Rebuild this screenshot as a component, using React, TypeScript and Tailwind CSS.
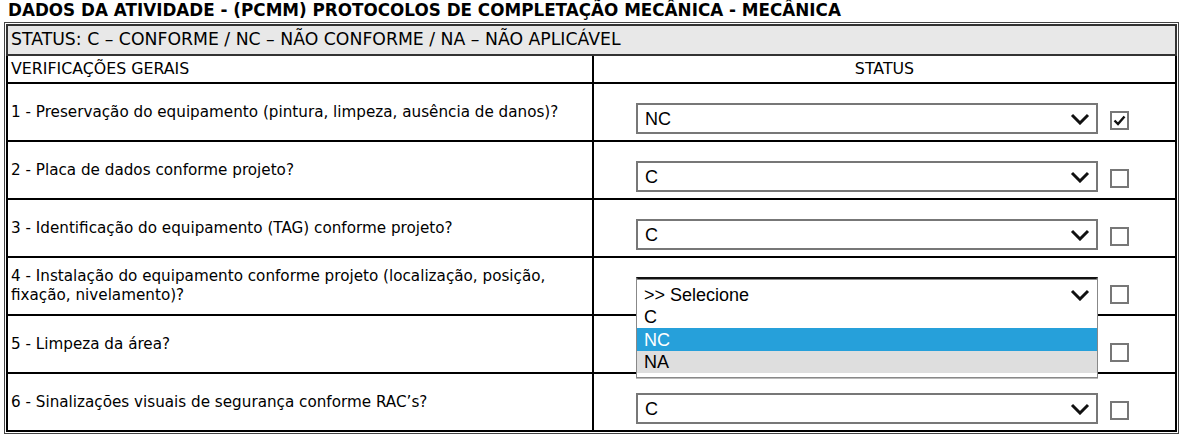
import { useState } from 'react';

type Status = '' | 'C' | 'NC' | 'NA';

type Item = {
  id: number;
  text: string;
  status: Status;
  checked: boolean;
  open?: boolean;
};

const ITEMS: Item[] = [
  { id: 1, text: '1 - Preservação do equipamento (pintura, limpeza, ausência de danos)?', status: 'NC', checked: true },
  { id: 2, text: '2 - Placa de dados conforme projeto?', status: 'C', checked: false },
  { id: 3, text: '3 - Identificação do equipamento (TAG) conforme projeto?', status: 'C', checked: false },
  {
    id: 4,
    text: '4 - Instalação do equipamento conforme projeto (localização, posição, fixação, nivelamento)?',
    status: '',
    checked: false,
    open: true,
  },
  { id: 5, text: '5 - Limpeza da área?', status: 'C', checked: false },
  { id: 6, text: '6 - Sinalizações visuais de segurança conforme RAC’s?', status: 'C', checked: false },
];

const OPTIONS: { value: Status; label: string }[] = [
  { value: '', label: '>> Selecione' },
  { value: 'C', label: 'C' },
  { value: 'NC', label: 'NC' },
  { value: 'NA', label: 'NA' },
];

function Chevron() {
  return (
    <svg width="20" height="12" viewBox="0 0 20 12" className="shrink-0">
      <polyline points="2,2 10,10 18,2" fill="none" stroke="#111" strokeWidth="3" />
    </svg>
  );
}

function Checkbox({ checked }: { checked: boolean }) {
  return (
    <span className="mt-[3px] flex h-[19px] w-[19px] shrink-0 items-center justify-center border-2 border-[#777] bg-white">
      {checked && (
        <svg width="13" height="11" viewBox="0 0 13 11">
          <polyline points="1.5,5.5 5,9 11.5,1.5" fill="none" stroke="#111" strokeWidth="2.4" />
        </svg>
      )}
    </span>
  );
}

function StatusSelect({ value, open }: { value: Status; open?: boolean }) {
  const label = OPTIONS.find((o) => o.value === value)?.label ?? '';
  return (
    <div className="relative font-['Liberation_Sans',Arial,sans-serif]">
      <div
        className={
          open
            ? 'flex h-[31px] w-[462px] items-center justify-between border-2 border-[#777] border-t-[#111] bg-white pl-[7px] pr-[6px]'
            : 'flex h-[31px] w-[462px] items-center justify-between border-2 border-[#777] bg-white pl-[7px] pr-[6px]'
        }
      >
        <span className="text-[18px] leading-[22px]">{label}</span>
        <Chevron />
      </div>
      {open && (
        <div className="absolute left-0 top-[2px] z-10 w-[462px] border border-[#888] bg-white pb-[4px] shadow-[0_1px_0_#bbb]">
          <div className="flex h-[26px] items-center justify-between pl-[7px] pr-[7px] pt-[3px]">
            <span className="text-[18px] leading-[22px]">&gt;&gt; Selecione</span>
            <Chevron />
          </div>
          <div className="flex h-[22px] items-center pl-[7px] text-[18px] leading-[22px]">C</div>
          <div className="flex h-[23px] items-center bg-[#26a0da] pl-[7px] text-[18px] leading-[22px] text-white">NC</div>
          <div className="flex h-[22px] items-center bg-[#dedede] pl-[7px] text-[18px] leading-[22px]">NA</div>
        </div>
      )}
    </div>
  );
}

export default function App() {
  const [items] = useState(ITEMS);

  return (
    <div className="h-[434px] w-[1184px] overflow-hidden bg-white font-['DejaVu_Sans',sans-serif] text-black">
      <h1 className="pl-[8px] pt-[1px] text-[16.8px] font-bold leading-[19px]">
        DADOS DA ATIVIDADE - (PCMM) PROTOCOLOS DE COMPLETAÇÃO MECÂNICA - MECÂNICA
      </h1>
      <div className="ml-[4px] mt-[2px] w-[1175px] border border-[#444] p-px">
        <table className="w-full border-collapse">
          <tbody>
            <tr>
              <td colSpan={2} className="h-[30px] border-2 border-[#333] bg-[#e8e8e8] px-[3px] text-[17.3px] leading-tight">
                STATUS: C – CONFORME / NC – NÃO CONFORME / NA – NÃO APLICÁVEL
              </td>
            </tr>
            <tr>
              <td className="h-[28px] w-[586px] border-2 border-black px-[3px] text-[15.8px] leading-tight">
                VERIFICAÇÕES GERAIS
              </td>
              <td className="h-[28px] border-2 border-black text-center text-[15.8px] leading-tight">STATUS</td>
            </tr>
            {items.map((item) => (
              <tr key={item.id}>
                <td className="h-[58px] border-2 border-black px-[3px] align-middle text-[15.2px] leading-[19px]">
                  {item.text}
                </td>
                <td className="h-[58px] border-2 border-black pb-[3px] pl-[42px] pt-[19px] align-top">
                  <div className="flex items-center gap-[12px]">
                    <StatusSelect value={item.status} open={item.open} />
                    <Checkbox checked={item.checked} />
                  </div>
                </td>
              </tr>
            ))}
          </tbody>
        </table>
      </div>
    </div>
  );
}
